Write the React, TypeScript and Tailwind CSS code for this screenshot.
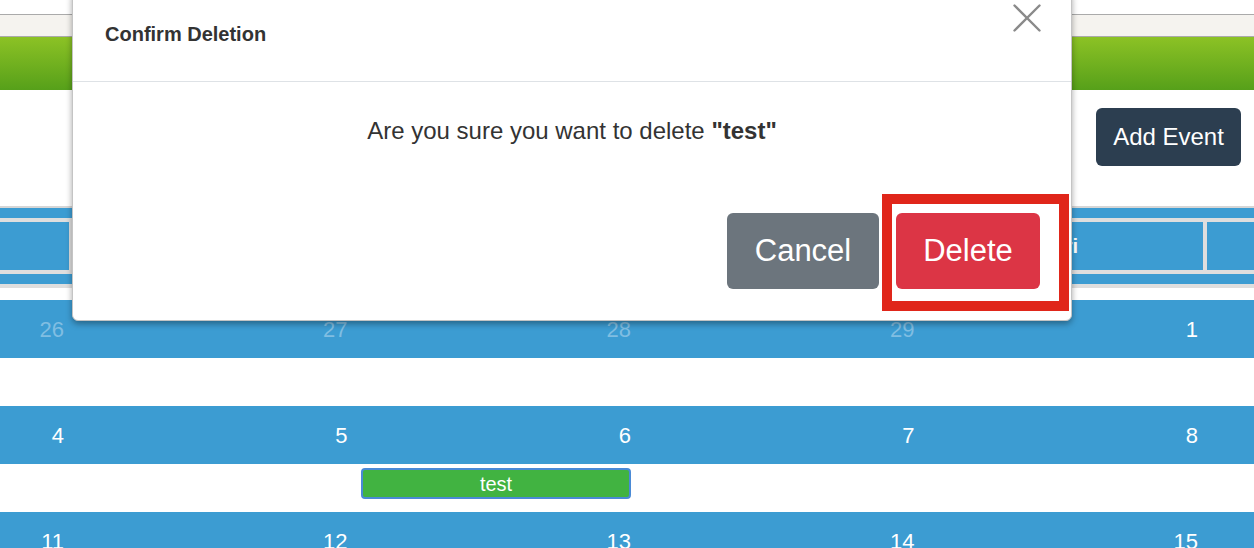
const weekdays = ['Mon', 'Tue', 'Wed', 'Thu', 'Fri', 'Sat'];

const weeks = [
    { days: [26, 27, 28, 29, 1, 2], faded: 4, event: null as null | { day: number; title: string } },
    { days: [4, 5, 6, 7, 8, 9], faded: 0, event: { day: 2, title: 'test' } },
    { days: [11, 12, 13, 14, 15, 16], faded: 0, event: null },
];

function CalendarHeader() {
    return (
        <div>
            <div className="h-[2px] bg-[#d6d6d6]" />
            <div className="h-[10px] bg-[#3c9cd2]" />
            <div className="h-[4px] bg-[#dedede]" />
            <div className="flex h-[48px] gap-[4px] bg-[#dedede] ml-[-210.5px]">
                {weekdays.map((d) => (
                    <div key={d} className="flex w-[279.5px] shrink-0 items-center justify-center bg-[#3c9cd2] pl-[4px] text-[20px] font-bold text-white">
                        {d}
                    </div>
                ))}
            </div>
            <div className="h-[4px] bg-[#dedede]" />
            <div className="h-[10px] bg-[#3c9cd2]" />
            <div className="h-[4px] bg-[#dedede]" />
            <div className="h-[12px]" />
        </div>
    );
}

function Week({ week }: { week: (typeof weeks)[number] }) {
    return (
        <div>
            <div className="grid h-[58px] grid-cols-[repeat(6,283.5px)] bg-[#3c9cd2] ml-[-217.5px]">
                {week.days.map((n, i) => (
                    <div key={i} className="flex items-center justify-end pr-[2px]">
                        <span className={`text-[22px] ${i < week.faded ? 'text-[#80bee2]' : 'text-white'}`}>{n}</span>
                    </div>
                ))}
            </div>
            <div className="grid h-[48px] grid-cols-[repeat(6,283.5px)] ml-[-217.5px]">
                {week.days.map((n, i) => (
                    <div key={i} className="pt-[4px]">
                        {week.event && week.event.day === i && (
                            <div className="ml-[11.5px] mr-[2px] flex h-[31px] items-center justify-center rounded-[4px] border-2 border-[#4a8ad6] bg-[#41b341] text-[20px] text-white">
                                {week.event.title}
                            </div>
                        )}
                    </div>
                ))}
            </div>
        </div>
    );
}

function ConfirmModal() {
    return (
        <div className="absolute left-[72px] top-[-10px] z-10 w-[1000px] rounded-[6px] border border-[#c4c4c4] bg-white shadow-[0_3px_6px_rgba(0,0,0,0.35)]">
            <div className="h-[91px] border-b border-[#dee2e6] pl-[32px] pt-[31px]">
                <h5 className="text-[20px] font-bold leading-[24px] text-[#333]">Confirm Deletion</h5>
            </div>
            <button className="absolute right-[30px] top-[13px]">
                <svg width="28" height="28" viewBox="0 0 28 28" fill="none" stroke="#8a8a8a" strokeWidth="2.4" strokeLinecap="round">
                    <path d="M1.5 1.5 L26.5 26.5 M26.5 1.5 L1.5 26.5" />
                </svg>
            </button>
            <div className="py-[31px] text-center text-[24px] leading-[36px] text-[#333]">
                Are you sure you want to delete <b>"test"</b>
            </div>
            <div className="flex justify-end gap-[17px] pb-[31px] pr-[31px] pt-[33px]">
                <button className="h-[76px] w-[152px] rounded-[6px] bg-[#6c757d] text-[31px] text-white">Cancel</button>
                <button className="h-[76px] w-[144px] rounded-[6px] bg-[#dc3545] text-[31px] text-white">Delete</button>
            </div>
        </div>
    );
}

export default function App() {
    return (
        <div className="relative h-[548px] w-[1254px] overflow-hidden bg-white font-['Liberation_Sans',Arial,sans-serif]">
            <div className="h-[14px]" />
            <div className="h-[23px] border-y border-[#aaa] bg-[#f5f3ef]" />
            <div className="h-[53px] bg-gradient-to-b from-[#8cc225] to-[#56a01a]" />

            <div className="flex h-[116px] items-start justify-end pr-[13px] pt-[18px]">
                <button className="h-[58px] w-[145px] rounded-[6px] bg-[#2c3e50] text-[24px] text-white">Add Event</button>
            </div>

            <CalendarHeader />
            {weeks.map((w, i) => (
                <Week key={i} week={w} />
            ))}

            <ConfirmModal />

            {/* highlight around the delete button */}
            <div className="absolute left-[882px] top-[194px] z-20 h-[117px] w-[187px] border-[10px] border-[#e0261a]" />
        </div>
    );
}
